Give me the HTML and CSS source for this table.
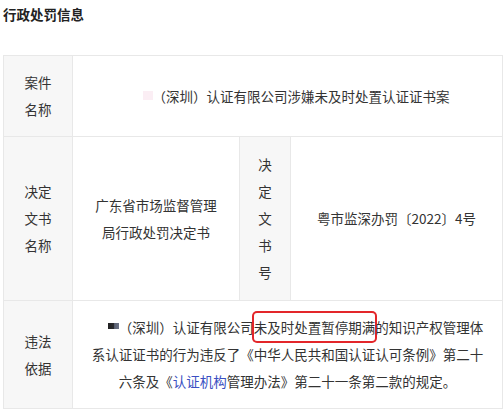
FILE: index.html
```html
<!DOCTYPE html>
<html lang="zh-CN">
<head>
<meta charset="utf-8">
<title>行政处罚信息</title>
<link rel="stylesheet" href="styles.css">
</head>
<body>
<div class="page">
  <h2 class="title">行政处罚信息</h2>
  <table class="info">
    <colgroup>
      <col class="c1">
      <col class="c2">
      <col class="c3">
      <col class="c4">
    </colgroup>
    <tbody>
      <tr>
        <th class="label">案件名称</th>
        <td class="value" colspan="3"><span class="redact redact-light"><i></i></span>（深圳）认证有限公司涉嫌未及时处置认证证书案</td>
      </tr>
      <tr>
        <th class="label">决定文书名称</th>
        <td class="value value-mid">广东省市场监督管理局行政处罚决定书</td>
        <th class="label label-narrow">决定文书号</th>
        <td class="value">粤市监深办罚〔2022〕4号</td>
      </tr>
      <tr>
        <th class="label">违法依据</th>
        <td class="value" colspan="3"><span class="redact redact-dark"><i></i></span>（深圳）认证有限公司<span class="hl">未及时处置暂停期满</span>的知识产权管理体系认证证书的行为违反了《中华人民共和国认证认可条例》第二十六条及《<a class="link" href="#">认证机构</a>管理办法》第二十一条第二款的规定。</td>
      </tr>
    </tbody>
  </table>
</div>
</body>
</html>
```

FILE: styles.css
```css
html, body {
  margin: 0;
  padding: 0;
  background: #ffffff;
}

body {
  font-family: "Noto Sans CJK SC", "Microsoft YaHei", sans-serif;
  color: #333333;
  font-size: 13.5px;
}

.page {
  padding: 4px 1px 0 3px;
}

.title {
  margin: 0 0 31px 0;
  font-size: 13.5px;
  line-height: 20px;
  font-weight: 700;
  color: #222222;
}

.info {
  width: 500px;
  table-layout: fixed;
  border-collapse: separate;
  border-spacing: 0;
  border-top: 1px solid #e8e8e8;
  border-left: 1px solid #e8e8e8;
}

.c1 { width: 69px; }
.c2 { width: 167px; }
.c3 { width: 51px; }
.c4 { width: 212px; }

.info th,
.info td {
  border-right: 1px solid #e8e8e8;
  border-bottom: 1px solid #e8e8e8;
  line-height: 27px;
  text-align: center;
  vertical-align: middle;
  font-weight: 400;
  color: #333333;
}

.label {
  background: #f7f7f7;
  padding: 13px 15px;
}

.label-narrow {
  padding: 14px 13px;
}

.value {
  background: #ffffff;
  padding: 13px 15px;
}

.value-mid {
  padding: 13px 16px;
}

.redact {
  display: inline-block;
  position: relative;
  width: 27px;
  height: 14px;
  vertical-align: -2px;
}

.redact i {
  position: absolute;
  right: 0;
}

.redact-light i {
  width: 10px;
  height: 9px;
  top: 1px;
  background: #fbeef4;
}

.redact-dark i {
  width: 11px;
  height: 6px;
  top: 2px;
  background: linear-gradient(to right, #222222 0, #2a2a2e 50%, #5b6274 60%, #6a7184 100%);
}

.hl {
  border-radius: 3px;
  box-shadow: 0 0 0 2px #e3262a;
  padding: 4px 0;
}

.link {
  color: #3a4fc2;
  text-decoration: none;
}
```
